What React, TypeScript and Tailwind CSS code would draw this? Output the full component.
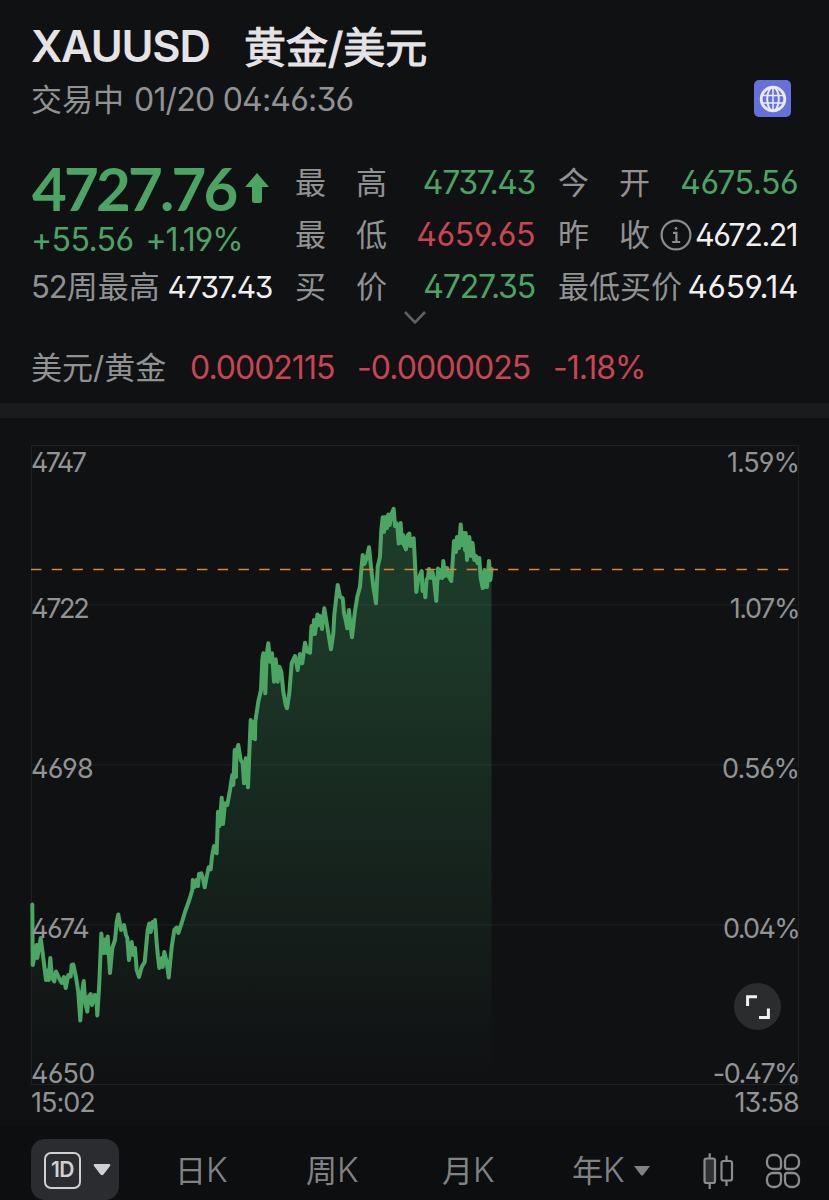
import React from "react";

const LATIN = "font-['Inter','Noto_Sans_CJK_SC',sans-serif] [font-feature-settings:'ss01']";

const LINE = [
  "32.3,904.5 32.7,965 36.7,945 37.3,958 40.7,938 43.3,958 46,980 48.3,970 48.7,980 50.3,958 52,978 54.3,981.5 56,971.5 60,980 61.7,983 64,977 65.7,988 68.3,975 70.7,976.5 71.7,965 73.3,964.5 76,977 78.3,992 80.3,1020.5 82,993 83.7,981 85.3,1003 87.3,1011.5 88.3,997 90.7,994 92,1005 94.7,995 96.3,996 97.3,1015.5 99.3,983 101.3,933.5 103.3,953 105.3,939.5 106,953 107.7,936.5 110,973 112.3,948 115,940 116.7,922 118.3,914.5 121,930 124,925 126,935 127.3,938 129,960 131.7,942 133.3,955 135,948 136.7,970 139,977 141.7,967 144.7,962 147.7,930 149.3,923.5 150.7,932 152.7,922 153.7,927 155,920 156.7,943 158,957 159.3,968 161.7,958 162.7,967 164.3,952 166.7,962 168.7,977.5 171.7,947 174.3,930 176.7,927.5 178.3,933 181.7,923 185,912 189.3,900 192.3,890 192.8,880 194.5,887 196.5,880 198,886 199,874",
  "201.3,873.3 203.3,880 204.7,887.3 206.7,876.7 208.7,867.3 210.7,869.3 212,856.7 214,846 216.7,853.3 218,811.7 219.5,826 220.7,812 221.7,797.7 223,824 225,803.3 227.3,805 230,790 232.3,775 233.3,785 234.7,750 236,777 236.3,751.7 238.3,745 240.7,760 242.7,763.3 244,783.3 245.7,758.3 248,787.3 249.3,753.3 250.7,720 252.3,738 253.5,722 255,739.3 255.3,721.7 258.3,701.7 261,690 262.3,660 263.3,653.3 265.3,693.3 266.7,655 268.3,643.3 270,661.7 272,653.3 274,681.7 275.7,659.3 277.7,681.7 279.3,666.7 281.3,671.7 283.3,691.7 285.7,705 287,708.3 289.3,693.3 291.7,663.3 295,656 297.7,670 300,654 302.3,663.3 305,642.7 307.3,651.7 310,652.7 311.5,626 313,634 314,620 315,634 317.5,614.5 319,625",
  "320,616 322,629 324.3,608.3 326.7,623.3 331,649.3 333.3,633.3 334.3,615 336,600 337.7,585 340,596.7 342.7,598.3 344,613.3 345.7,620 347.3,628.3 349,610 350.5,626 352,637.3 354.7,613.3 357.3,596.7 360,586.7 361.3,570 362.7,555 364.3,564 366.7,558 369,547.3 371,566.7 373.3,586.7 376,603.3 377.7,566.7 380,556.7 381.3,530 382.7,517.3 384,532 385.5,517 387,528 388.3,514.5 389.7,525 391.5,514 393.7,508.8 395,526 396.3,523 397.5,528 398.7,543.5 400.6,523 402,543 403,535 404,545 406,549.3 407.3,536 409.3,533.5 410.3,546 411.7,539 412.5,546 413.7,538.3 415,563 416.3,592 418,580 419,578 421.7,571 422.5,591 424,585 425.3,597.3 426.5,580 428,577 429,569 431,578 432.5,572 434,580 436.3,601 438,568.5 439.5,578 441,570 442.3,578 443.3,561 445,576 447,568 449,577 451.3,581 453,557 454,541 456,552 457,537 459,548 460.7,524.5 462,545 463.5,533 465,550 465.7,533 467,560 469.3,537 471,556 472.5,543 474.3,560 476,556 477.5,563 479.3,558 480.7,578 482.7,588 484.5,570 486,587 487,587 489,561 490.3,580 491.5,569",
].join(" ");

function Stat({ label, value, tone, info }: { label: string; value: string; tone: string; info?: boolean }) {
  return (
    <div className="flex h-[52px] items-center justify-between whitespace-nowrap">
      <div className="flex shrink-0 items-center">
        {label.length === 2 ? (
          <span className="flex w-[92px] justify-between text-[31px] text-[#919294]">
            <span>{label[0]}</span>
            <span>{label[1]}</span>
          </span>
        ) : (
          <span className="text-[31px] text-[#919294]">{label}</span>
        )}
        {info && (
          <svg viewBox="0 0 32 32" className="ml-[10px] h-8 w-8 shrink-0" fill="none" stroke="#8b8c8e" strokeWidth="2.2">
            <circle cx="16" cy="16" r="14.4" />
            <path d="M13 13.8h3.4v9M12.2 23h8" />
            <circle cx="16" cy="9.3" r="1" fill="#8b8c8e" stroke="#8b8c8e" strokeWidth="1" />
          </svg>
        )}
      </div>
      <span className={tone}>{value}</span>
    </div>
  );
}

const GREEN = "text-[#4ba463]";
const RED = "text-[#cb4453]";
const WHITE = "text-[#f0f0f1]";

const LEFT_AXIS = [
  { text: "4747", cls: "top-[31px] tracking-[-2.6px]" },
  { text: "4722", cls: "top-[177px] tracking-[-2.3px]" },
  { text: "4698", cls: "top-[337px] tracking-[-0.6px]" },
  { text: "4674", cls: "top-[497px] tracking-[-1.5px]" },
  { text: "4650", cls: "top-[642px] tracking-[-0.8px]" },
  { text: "15:02", cls: "top-[671px] tracking-[-1px]" },
];

const RIGHT_AXIS = [
  { text: "1.59%", cls: "top-[31px] tracking-[-1px]" },
  { text: "1.07%", cls: "top-[177px] tracking-[-1.4px]" },
  { text: "0.56%", cls: "top-[337px] tracking-[-0.9px]" },
  { text: "0.04%", cls: "top-[497px] tracking-[-1.7px]" },
  { text: "-0.47%", cls: "top-[642px] tracking-[-1.6px]" },
  { text: "13:58", cls: "top-[671px] tracking-[-0.8px]" },
];

function Chart() {
  return (
    <section className="relative h-[708px] w-full text-[27px] leading-7 text-[#929395]">
      <svg viewBox="0 418 829 708" className="block h-[708px] w-[829px]" fill="none">
        <defs>
          <linearGradient id="area" x1="0" y1="505" x2="0" y2="1075" gradientUnits="userSpaceOnUse">
            <stop offset="0" stopColor="#42ae68" stopOpacity="0.28" />
            <stop offset="0.25" stopColor="#42ae68" stopOpacity="0.24" />
            <stop offset="0.65" stopColor="#42ae68" stopOpacity="0.11" />
            <stop offset="1" stopColor="#42ae68" stopOpacity="0" />
          </linearGradient>
        </defs>
        <polygon points={`${LINE} 491.5,1084 31.5,1084`} fill="url(#area)" />
        <path
          d="M31.5 445.5H798.5V1084.5H31.5ZM31.5 605H798.5M31.5 765H798.5M31.5 925H798.5"
          stroke="#ffffff"
          strokeOpacity="0.065"
        />
        <polyline points={LINE} stroke="#4ba664" strokeWidth="4" strokeLinejoin="round" strokeLinecap="round" />
        <path d="M31 569.5H790" stroke="#e0852f" strokeWidth="1.5" strokeDasharray="10.4 10.35" />
      </svg>
      {LEFT_AXIS.map((a) => (
        <span key={a.text} className={`absolute left-[31px] ${a.cls}`}>{a.text}</span>
      ))}
      {RIGHT_AXIS.map((a) => (
        <span key={a.text} className={`absolute right-[30px] ${a.cls}`}>{a.text}</span>
      ))}
      <button className="absolute left-[734px] top-[565px] flex h-[47px] w-[47px] items-center justify-center rounded-full bg-[#2b2c2e]">
        <svg viewBox="0 0 24 24" className="h-6 w-6" fill="none" stroke="#f1f1f1" strokeWidth="3">
          <path d="M1.6 11V1.7H11M22.4 13.5V22.5H13" />
        </svg>
      </button>
    </section>
  );
}

export default function App() {
  return (
    <main className={`flex h-[1200px] w-[829px] flex-col overflow-hidden bg-[#101113] ${LATIN}`}>
      <header className="flex h-[157px] items-start justify-between pl-[31px] pr-[38px] pt-5">
        <div>
          <h1 className="flex h-[54px] items-center whitespace-nowrap text-[#e4e4e6]">
            <span className="w-[213px] text-[43.5px] font-semibold tracking-[-1.2px]">XAUUSD</span>
            <span className="text-[42px] font-normal [-webkit-text-stroke:1.1px_#e4e4e6]">黄金/美元</span>
          </h1>
          <p className="flex h-[52px] items-center gap-2.5 whitespace-nowrap text-[#919294]">
            <span className="text-[31px]">交易中</span>
            <span className="text-[32px] tracking-[-0.8px]">01/20 04:46:36</span>
          </p>
        </div>
        <span className="mt-[60px] flex h-[37px] w-[37px] items-center justify-center rounded-[5px] bg-[#6571db]">
          <svg viewBox="0 0 28 28" className="h-7 w-7" fill="none" stroke="#e9ebff" strokeWidth="2.8">
            <circle cx="14" cy="14" r="11.8" />
            <ellipse cx="14" cy="14" rx="5.8" ry="11.8" strokeWidth="2" />
            <path d="M14 2v24M2.5 10.5h23M2.5 18h23" strokeWidth="1.5" />
          </svg>
        </span>
      </header>

      <section className="grid h-[156px] shrink-0 grid-cols-[241px_240px_240px] gap-x-[23px] pl-[31px]">
        <div className="whitespace-nowrap">
          <div className={`flex h-[62px] items-center ${GREEN}`}>
            <span className="w-[214px] pl-px font-['Lato','Noto_Sans_CJK_SC',sans-serif] text-[60px] font-bold leading-[62px] tracking-[-2.8px]">4727.76</span>
            <svg viewBox="0 0 24 30" className="h-[30px] w-6 shrink-0" fill="currentColor">
              <path d="M12 0 24 14H17V27.5Q17 30 14.5 30H9.500Q7 30 7 27.500V14H0Z" />
            </svg>
          </div>
          <div className={`flex h-[42px] items-center gap-3 text-[32px] leading-[42px] ${GREEN}`}>
            <span className="tracking-[-0.6px]">+55.56</span>
            <span className="tracking-[-1.1px]">+1.19%</span>
          </div>
          <div className="flex h-[52px] items-center justify-between">
            <span className="text-[31px] text-[#919294]">
              <span className="tracking-[-1px]">52</span>周最高
            </span>
            <span className={`text-[30px] tracking-[-1.4px] ${WHITE}`}>4737.43</span>
          </div>
        </div>
        <div>
          <Stat label="最高" value="4737.43" tone={`text-[32px] tracking-[-1.4px] ${GREEN}`} />
          <Stat label="最低" value="4659.65" tone={`text-[32px] tracking-[-0.4px] ${RED}`} />
          <Stat label="买价" value="4727.35" tone={`text-[32px] tracking-[-1.2px] ${GREEN}`} />
        </div>
        <div>
          <Stat label="今开" value="4675.56" tone={`text-[32px] tracking-[-0.5px] ${GREEN}`} />
          <Stat label="昨收" value="4672.21" tone={`text-[30.5px] tracking-[-1.4px] mr-px ${WHITE}`} info />
          <Stat label="最低买价" value="4659.14" tone={`text-[31.5px] tracking-[-0.3px] ${WHITE}`} />
        </div>
      </section>

      <section className="h-[90px] shrink-0 pl-[31px]">
        <div className="flex h-[30px] w-[768px] justify-center">
          <svg viewBox="0 0 22 13" className="-mt-[2px] h-[13px] w-[22px]" fill="none" stroke="#5e5f61" strokeWidth="2.6">
            <path d="M1 1 11 11.500 21 1" />
          </svg>
        </div>
        <div className={`flex h-[50px] items-center whitespace-nowrap ${RED}`}>
          <span className="w-[159px] text-[31px] text-[#919294]">美元/黄金</span>
          <span className="w-[167px] text-[32px] tracking-[-1px]">0.0002115</span>
          <span className="w-[196px] text-[32px] tracking-[-0.9px]">-0.0000025</span>
          <span className="text-[32px] tracking-[-1px]">-1.18%</span>
        </div>
      </section>

      <div className="h-[15px] shrink-0 bg-[#1a1b1d]" />
      <Chart />

      <nav className="flex h-[74px] shrink-0 items-start bg-[#0d0e10] pl-[31px] pt-[13px] text-[31px] text-[#818284]">
        <button className="flex h-[61px] w-[88px] items-center gap-3 rounded-[14px] bg-[#2b2c30] pl-[13px] pt-px text-[#d0d0d2]">
          <span className="flex h-[37px] w-[37px] items-center justify-center rounded-[7px] border-2 border-current text-[21px] font-semibold tracking-[-0.6px]">1D</span>
          <svg viewBox="0 0 18 12" className="h-3 w-[18px]" fill="currentColor">
            <path d="M1.500 0H16.500Q18 .5 17 2L10.500 10.500Q9 12 7.500 10.500L1 2Q0 .5 1.500 0Z" />
          </svg>
        </button>
        <div className="flex h-[62px] items-center whitespace-nowrap pt-px">
          <span className="ml-[56px] w-[131px]">日<span className="text-[33.5px] font-light">K</span></span>
          <span className="w-[136px]">周<span className="text-[33.5px] font-light">K</span></span>
          <span className="w-[130px]">月<span className="text-[33.5px] font-light">K</span></span>
          <span className="w-[62px]">年<span className="text-[33.5px] font-light">K</span></span>
          <svg viewBox="0 0 16 10" className="h-2.5 w-4" fill="currentColor">
            <path d="M0 0H16L9 9.200Q8 10 7 9.200Z" />
          </svg>
          <svg viewBox="0 0 32 38" className="ml-[52px] h-[38px] w-8" fill="none" stroke="#8b8c8e" strokeWidth="2.2">
            <rect x="2.500" y="6.500" width="10.500" height="24.500" rx="2" fill="#303134" />
            <path d="M7.700 1.200V6.500M7.700 31v6M24.500 3.500v5.500M24.500 28.500v5.500" />
            <rect x="19.500" y="9" width="10.500" height="19.500" rx="2" />
          </svg>
          <svg viewBox="0 0 36 36" className="ml-[31px] h-9 w-9" fill="none" stroke="#8b8c8e" strokeWidth="2.300">
            <path d="M8 2H10A6 6 0 0 1 16 8V13.500A2.500 2.500 0 0 1 13.500 16H8A6 6 0 0 1 2 10V8A6 6 0 0 1 8 2Z" />
            <path d="M28 2H26A6 6 0 0 0 20 8V13.500A2.500 2.500 0 0 0 22.500 16H28A6 6 0 0 0 34 10V8A6 6 0 0 0 28 2Z" />
            <path d="M8 34H10A6 6 0 0 0 16 28V22.500A2.500 2.500 0 0 0 13.500 20H8A6 6 0 0 0 2 26V28A6 6 0 0 0 8 34Z" />
            <path d="M28 34H26A6 6 0 0 1 20 28V22.500A2.500 2.500 0 0 1 22.500 20H28A6 6 0 0 1 34 26V28A6 6 0 0 1 28 34Z" />
          </svg>
        </div>
      </nav>
    </main>
  );
}
